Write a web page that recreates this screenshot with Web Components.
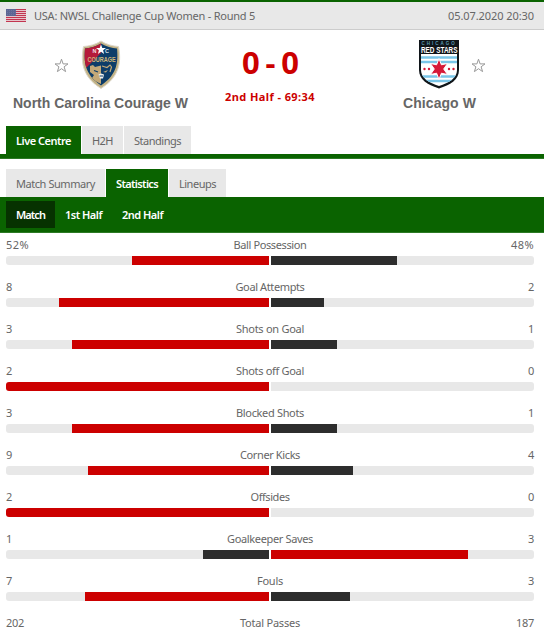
<!DOCTYPE html>
<html lang="en">
<head>
<meta charset="utf-8">
<title>North Carolina Courage W - Chicago W</title>
<style>
	body {
		margin: 0;
		height: 632px;
		overflow: hidden;
		background: #fff;
		color: #666;
		font: 11px/14px "Noto Sans", "Open Sans", sans-serif;
	}
</style>
</head>
<body>
<match-page></match-page>

<script>
// fit-text. Single line label, spaced out to the width given in pixels
class FitText extends HTMLElement {
	constructor() {
		super();
		this.attachShadow({ mode: 'open' })
		this.shadowRoot.innerHTML = `
			<style>
				:host { display: inline-block; white-space: nowrap; }
			</style>
			<slot></slot>
		`;
	}
	connectedCallback() {
		const width = parseFloat(this.getAttribute('w'))
		if (!width) return
		this.style.letterSpacing = '0'
		const natural = this.getBoundingClientRect().width
		this.style.letterSpacing = ((width - natural) / this.textContent.length).toFixed(3) + 'px'
		this.style.width = width + 'px'
	}
}

class EventBar extends HTMLElement {
	constructor() {
		super();
		this.attachShadow({ mode: 'open' })
		this.shadowRoot.innerHTML = `
			<style>
				:host {
					display: flex; align-items: center; box-sizing: border-box;
					height: 30px; padding: 0 10px 0 6px;
					background: #e8e8e8;
					border-top: 2px solid #0a6300; border-bottom: 1px solid #ccc;
				}
				svg { margin-right: 8px; }
				slot[name=date] { display: block; margin-left: auto; }
			</style>
			<svg width="20" height="13" viewBox="0 0 20 13" shape-rendering="crispEdges">
				<rect width="20" height="13" fill="#c23650"/>
				<path d="M0 1.5h20M0 3.5h20M0 5.5h20M0 7.5h20M0 9.5h20M0 11.5h20" stroke="#e6c4ca"/>
				<rect width="10" height="7" fill="#5d6794"/>
				<path d="M1 1.5h9M1 3.5h9M1 5.5h9" stroke="#6c769f" stroke-dasharray="1 1"/>
			</svg>
			<slot></slot>
			<slot name="date"></slot>
		`;
	}
}

class FavStar extends HTMLElement {
	constructor() {
		super();
		this.attachShadow({ mode: 'open' })
		this.shadowRoot.innerHTML = `
			<style>
				:host { display: block; width: 15px; height: 15px; }
				svg { display: block; }
			</style>
			<svg width="15" height="15" viewBox="0 0 15 15">
				<path d="M7.5 1.2 9.1 5.9H14L10.1 8.8 11.6 13.6 7.5 10.7 3.4 13.6 4.9 8.8 1 5.9H5.9Z" fill="#fff" stroke="#999"/>
			</svg>
		`;
	}
}

class CourageCrest extends HTMLElement {
	constructor() {
		super();
		this.attachShadow({ mode: 'open' })
		this.shadowRoot.innerHTML = `
			<style>
				:host { display: block; }
				svg { display: block; }
				text { font-family: "Liberation Sans", sans-serif; font-weight: bold; }
			</style>
			<svg width="40" height="50" viewBox="0 0 40 50">
				<defs>
					<clipPath id="in"><path d="M20 3.5C25 6.5 31 8 36 8.5 37 21 37 34 20 45.5 3 34 3 21 4 8.5 9 8 15 6.5 20 3.5Z"/></clipPath>
				</defs>
				<path d="M20 1C25 4.5 32 6.2 37.5 6.5 40 20 40 36 20 48.5 0 36 0 20 2.5 6.5 8 6.2 15 4.5 20 1Z" fill="#c3b386" stroke="#ddd8cc"/>
				<g clip-path="url(#in)">
					<rect width="40" height="50" fill="#0d3d69"/>
					<path d="M0 0H20V13L6 27 0 32Z" fill="#b51a39"/>
					<path d="M9 26 12 25 14 27 20 25.5V44L14 41 11 38 13 35 9 32Z" fill="#c3a978"/>
					<path d="M21 26 26 27.5 29 25 30.5 27 29 32" fill="none" stroke="#c3a978" stroke-width="1.2"/>
					<path d="M13 30.5 17 32" stroke="#0d3d69" stroke-width="1.3"/>
					<path d="M22 32 27 30 25 32.5Z" fill="#c3a978"/>
					<path d="M17.5 34.5 20 33.5 23 34.5 22 38.5H19Z" fill="#f2f2ee"/>
					<path d="M18.5 36H22" stroke="#0d3d69"/>
				</g>
				<text x="11.5" y="13" font-size="5.5" fill="#f1dde0">N</text>
				<text x="24" y="13" font-size="5.5" fill="#dbe1e8">C</text>
				<path d="M20 4.5 21.3 8 25 8.1 22.100 10.3 23.1 14 20 11.8 16.9 14 17.9 10.3 15 8.1 18.7 8Z" fill="#fff"/>
				<text transform="translate(6.5 21.5) scale(.79 1)" font-size="7" fill="#d0b779">COURAGE</text>
			</svg>
		`;
	}
}

class RedStarsCrest extends HTMLElement {
	constructor() {
		super();
		this.attachShadow({ mode: 'open' })
		this.shadowRoot.innerHTML = `
			<style>
				:host { display: block; }
				svg { display: block; }
				text { font-family: "Liberation Sans", sans-serif; font-weight: bold; }
			</style>
			<svg width="40" height="50" viewBox="0 0 40 50">
				<defs>
					<clipPath id="in"><path d="M2 14H38V30C38 38 30 43 20 46 10 43 2 38 2 30Z"/></clipPath>
				</defs>
				<path d="M0 0H40V30C40 40 31 45 20 48.5 9 45 0 40 0 30Z" fill="#101519"/>
				<g clip-path="url(#in)">
					<rect width="40" height="50" fill="#fff"/>
					<path d="M0 17.5H40M0 22H40M0 36.5H40M0 41H40" stroke="#79c5e8" stroke-width="2.5"/>
				</g>
				<path d="M20 18.5 22.4 24.8 28.5 23.5 24.7 29 28.5 34.5 22.4 33.2 20 39.5 17.6 33.2 11.5 34.5 15.3 29 11.5 23.5 17.6 24.8Z" fill="#d51938" stroke="#fff"/>
				<g fill="#d51938">
					<circle cx="5.5" cy="29" r="1.2"/><circle cx="10" cy="29" r="1.2"/>
					<circle cx="30" cy="29" r="1.2"/><circle cx="34.5" cy="29" r="1.2"/>
				</g>
				<text x="2.5" y="5.2" font-size="4.5" letter-spacing="2" fill="#5797b1">CHICAGO</text>
				<text transform="translate(2 13) scale(.78 1)" font-size="8.2" fill="#fff">RED STARS</text>
			</svg>
		`;
	}
}

// team-box. Crest in the middle column, star on the side set by "side"
class TeamBox extends HTMLElement {
	constructor() {
		super();
		this.attachShadow({ mode: 'open' })
		this.shadowRoot.innerHTML = `
			<style>
				:host { display: block; text-align: center; }
				.top { display: grid; grid-template-columns: 1fr 40px 1fr; column-gap: 12px; align-items: center; height: 50px; }
				:host([side=away]) .top { padding-right: 2px; }
				fav-star { grid-column: 1; justify-self: end; grid-row: 1; }
				:host([side=away]) fav-star { grid-column: 3; justify-self: start; }
				slot[name=crest] { display: block; grid-column: 2; grid-row: 1; }
				.name { font: bold 14px/18px "Liberation Sans", Arial, sans-serif; margin-top: 4px; }
			</style>
			<div class="top"><fav-star></fav-star><slot name="crest"></slot></div>
			<div class="name"><slot></slot></div>
		`;
	}
}

class ScoreBoard extends HTMLElement {
	constructor() {
		super();
		this.attachShadow({ mode: 'open' })
		this.shadowRoot.innerHTML = `
			<style>
				:host { display: grid; grid-template-columns: 201px 138px 201px; height: 96px; padding-top: 10px; box-sizing: border-box; }
				.mid { text-align: center; color: #c00; font-weight: bold; }
				.score { font-size: 31px; line-height: 44px; }
				.status { margin-top: 6px; }
				slot { display: block; }
			</style>
			<slot name="home"></slot>
			<div class="mid">
				<div class="score"><slot name="score"></slot></div>
				<div class="status"><slot name="status"></slot></div>
			</div>
			<slot name="away"></slot>
		`;
	}
}

class TabItem extends HTMLElement {
	constructor() {
		super();
		this.attachShadow({ mode: 'open' })
		this.shadowRoot.innerHTML = `
			<style>
				:host { display: block; padding: 0 10px; line-height: 30px; height: 28px; background: #e8e8e8; }
				:host([active]) { background: #0a6300; color: #fff; font-weight: 600; }
				:host([sub]) { height: 27px; line-height: 27px; background: none; color: #fff; font-weight: 600; }
				:host([sub][active]) { background: #063200; }
			</style>
			<slot></slot>
		`;
	}
}

class TabBar extends HTMLElement {
	constructor() {
		super();
		this.attachShadow({ mode: 'open' })
		this.shadowRoot.innerHTML = `
			<style>
				:host { display: block; }
				.tabs { display: flex; gap: 1px; padding-left: 6px; }
				.line { display: flex; box-sizing: border-box; height: 5px; background: #0a6300; border-bottom: 1px solid #2c7a25; }
				:host([tall]) .line { height: 36px; padding: 4px 6px 0; }
			</style>
			<div class="tabs"><slot></slot></div>
			<div class="line"><slot name="sub"></slot></div>
		`;
	}
}

// stat-row. Both bars grow from the centre, the larger share is red
class StatRow extends HTMLElement {
	constructor() {
		super();
		this.attachShadow({ mode: 'open' })
	}
	connectedCallback() {
		const [home, away] = this.getAttribute('values').split(' ')
		const [hp, ap] = this.getAttribute('share').split(' ').map(Number)
		const number = v => `<fit-text w="${v.includes('%') ? 23 : v.length * 6}">${v}</fit-text>`
		this.shadowRoot.innerHTML = `
			<style>
				:host { display: block; height: 42px; padding: 5px 10px 0 6px; box-sizing: border-box; }
				.text { display: grid; grid-template-columns: 60px 1fr 60px; text-align: center; height: 18px; }
				.text > :first-child { text-align: left; }
				.text > :last-child { text-align: right; }
				.bars { display: grid; grid-template-columns: 1fr 1fr; gap: 2px; }
				.bar { display: flex; height: 9px; background: #e8e8e8; overflow: hidden; border-radius: 0 3px 3px 0; }
				.bar.home { justify-content: flex-end; border-radius: 3px 0 0 3px; }
				.bar i { background: #2d2d2d; }
				.bar i.win { background: #c00; }
			</style>
			<div class="text"><div>${number(home)}</div><div><slot></slot></div><div>${number(away)}</div></div>
			<div class="bars">
				<div class="bar home"><i class="${hp > ap ? 'win' : ''}" style="width:${Math.round(hp * 2.63)}px"></i></div>
				<div class="bar"><i class="${ap > hp ? 'win' : ''}" style="width:${Math.round(ap * 2.63)}px"></i></div>
			</div>
		`;
	}
}

class MatchPage extends HTMLElement {
	constructor() {
		super();
		this.attachShadow({ mode: 'open' })
	}
	connectedCallback() {
		// label, label width, values, share of the bar
		const stats = [
			['Ball Possession', 73, '52% 48%', '52 48'],
			['Goal Attempts', 69, '8 2', '80 20'],
			['Shots on Goal', 68, '3 1', '75 25'],
			['Shots off Goal', 68, '2 0', '100 0'],
			['Blocked Shots', 68, '3 1', '75 25'],
			['Corner Kicks', 60, '9 4', '69 31'],
			['Offsides', 39, '2 0', '100 0'],
			['Goalkeeper Saves', 86, '1 3', '25 75'],
			['Fouls', 26, '7 3', '70 30'],
			['Total Passes', 60, '202 187', '52 48']
		]
		this.shadowRoot.innerHTML = `
			<style>
				:host { display: block; width: 544px; height: 632px; overflow: hidden; }
				.second { margin-top: 10px; }
			</style>
			<event-bar>
				<fit-text w="221">USA: NWSL Challenge Cup Women - Round 5</fit-text>
				<fit-text slot="date" w="86">05.07.2020 20:30</fit-text>
			</event-bar>
			<score-board>
				<team-box slot="home" side="home"><courage-crest slot="crest"></courage-crest><fit-text w="175">North Carolina Courage W</fit-text></team-box>
				<fit-text slot="score" w="56">0 - 0</fit-text>
				<fit-text slot="status" w="90">2nd Half - 69:34</fit-text>
				<team-box slot="away" side="away"><red-stars-crest slot="crest"></red-stars-crest><fit-text w="73">Chicago W</fit-text></team-box>
			</score-board>
			<tab-bar>
				<tab-item active><fit-text w="55">Live Centre</fit-text></tab-item>
				<tab-item><fit-text w="21">H2H</fit-text></tab-item>
				<tab-item><fit-text w="47">Standings</fit-text></tab-item>
			</tab-bar>
			<tab-bar class="second" tall>
				<tab-item><fit-text w="79">Match Summary</fit-text></tab-item>
				<tab-item active><fit-text w="42">Statistics</fit-text></tab-item>
				<tab-item><fit-text w="37">Lineups</fit-text></tab-item>
				<tab-item slot="sub" sub active><fit-text w="29">Match</fit-text></tab-item>
				<tab-item slot="sub" sub><fit-text w="37">1st Half</fit-text></tab-item>
				<tab-item slot="sub" sub><fit-text w="41">2nd Half</fit-text></tab-item>
			</tab-bar>
			${stats.map(([label, w, values, share]) =>
				`<stat-row values="${values}" share="${share}"><fit-text w="${w}">${label}</fit-text></stat-row>`).join('')}
		`;
	}
}

customElements.define('event-bar', EventBar)
customElements.define('fav-star', FavStar)
customElements.define('courage-crest', CourageCrest)
customElements.define('red-stars-crest', RedStarsCrest)
customElements.define('team-box', TeamBox)
customElements.define('score-board', ScoreBoard)
customElements.define('tab-item', TabItem)
customElements.define('tab-bar', TabBar)
customElements.define('stat-row', StatRow)
customElements.define('match-page', MatchPage)
// last, so that every label is already slotted in place when it is measured
customElements.define('fit-text', FitText)
</script>
</body>
</html>
